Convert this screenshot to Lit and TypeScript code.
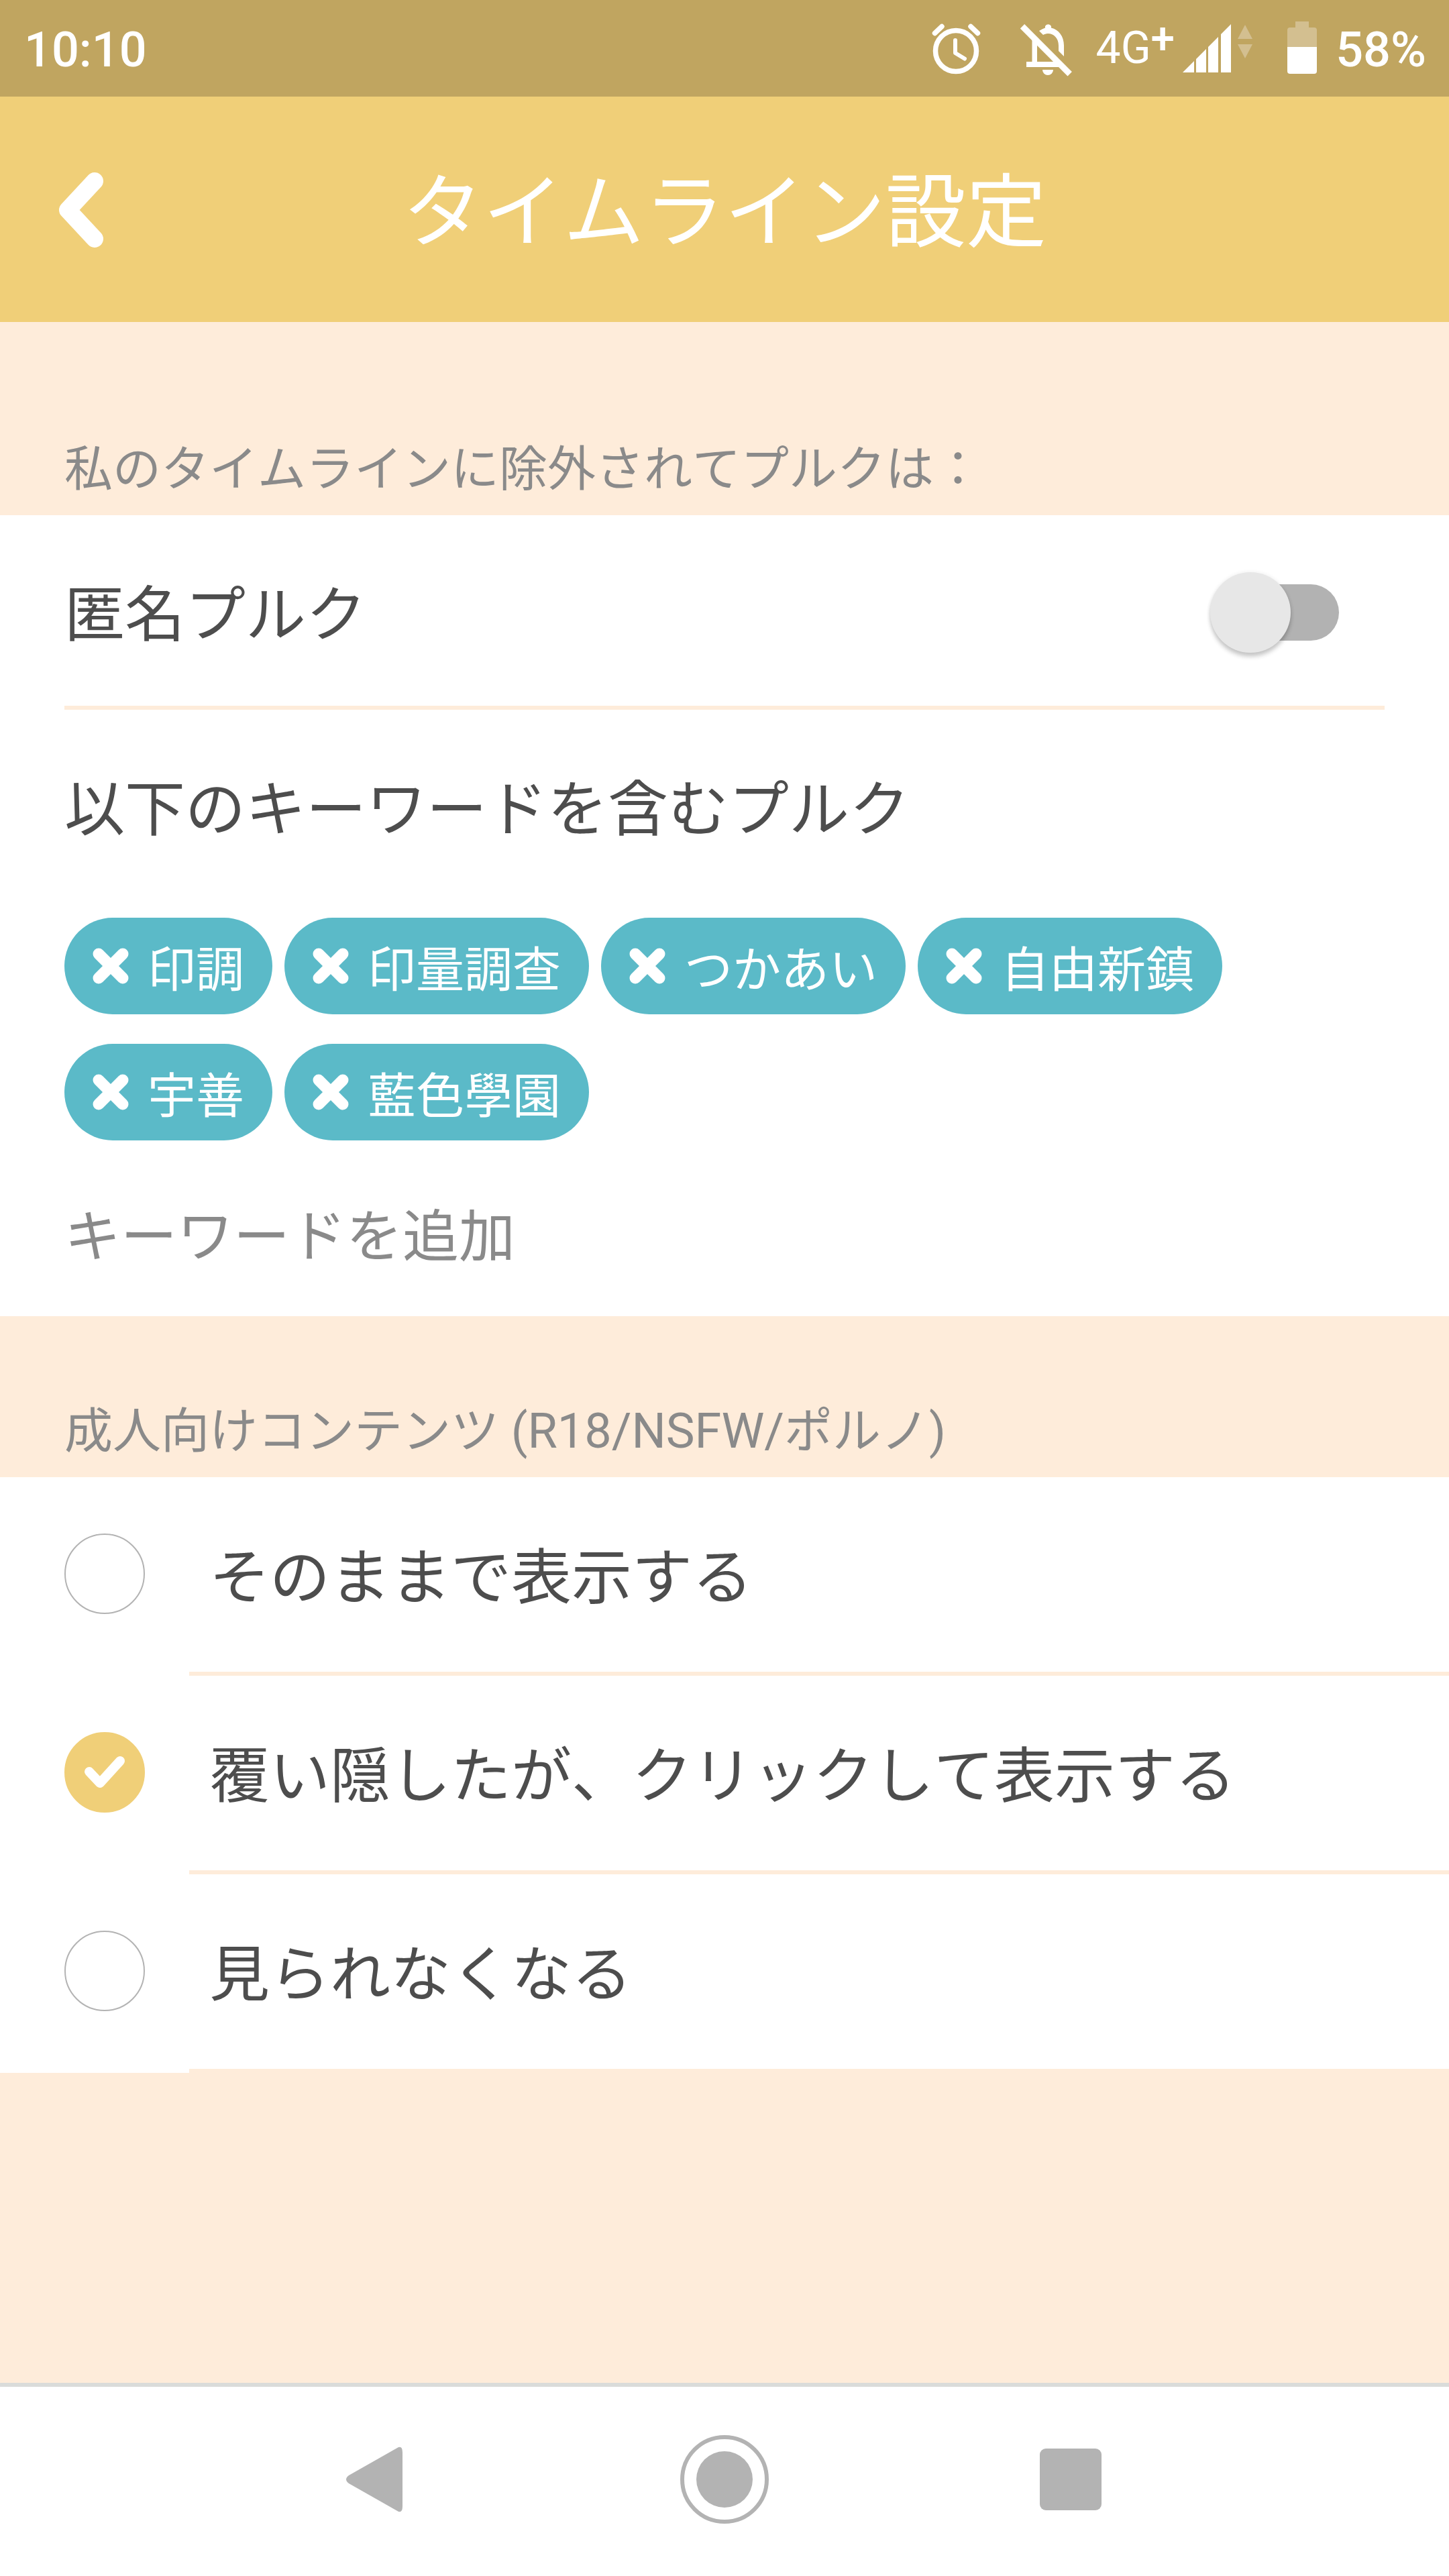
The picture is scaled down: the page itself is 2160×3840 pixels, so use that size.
import { LitElement, html, css, svg } from "lit";
import { customElement, property, state } from "lit/decorators.js";

const KEYWORDS = ["印調", "印量調查", "つかあい", "自由新鎮", "宇善", "藍色學園"];

const ADULT_OPTIONS = [
  { value: "show", text: "そのままで表示する" },
  { value: "cover", text: "覆い隠したが、クリックして表示する" },
  { value: "hide", text: "見られなくなる" },
];

const crossIcon = svg`<path d="M9 9 L45 45 M45 9 L9 45" fill="none" stroke="currentColor" stroke-width="17" stroke-linecap="round" />`;

@customElement("status-bar")
export class StatusBar extends LitElement {
  static styles = css`
    :host {
      display: flex;
      justify-content: space-between;
      align-items: center;
      height: 144px;
      padding: 0 34px 0 36px;
      background: #c0a560;
      color: #fff;
      font-size: 72px;
      line-height: 84px;
      font-weight: 500;
      box-sizing: border-box;
    }
    .text {
      padding-top: 6px;
    }
    .icons {
      display: flex;
      align-items: center;
    }
    .icons svg {
      display: block;
      height: 144px;
    }
    .alarm {
      width: 74px;
      margin-right: 56px;
    }
    .bell {
      width: 82px;
      margin-right: 34px;
    }
    .network {
      display: flex;
      align-items: center;
      margin-right: 12px;
      font-size: 66px;
      font-weight: 400;
    }
    .plus {
      font-size: 64px;
      font-weight: 500;
      padding-bottom: 28px;
    }
    .signal {
      width: 104px;
      margin-right: 52px;
    }
    .battery {
      width: 44px;
      margin-right: 28px;
    }
  `;

  render() {
    return html`
      <time class="text">10:10</time>
      <div class="icons">
        <svg class="alarm" viewBox="0 0 74 144" aria-hidden="true">
          <circle cx="37" cy="76" r="30.5" fill="none" stroke="#fff" stroke-width="7.5" />
          <path d="M36 60 V79 L50 87.500" fill="none" stroke="#fff" stroke-width="6" stroke-linejoin="round" stroke-linecap="round" />
          <path d="M5.500 49.500 L16 39.500 M59 39.500 L69.500 49.500" stroke="#fff" stroke-width="7.5" stroke-linecap="round" />
        </svg>
        <svg class="bell" viewBox="0 0 82 144" aria-hidden="true">
          <path d="M6 39.300 L76.700 110.300" stroke="#fff" stroke-width="9" />
          <path fill="#fff" d="M31 46 C34 44 37 42.500 40 41.500 V39 a5 5 0 0 1 9 0 V41.500 C60 44 68 54 68 68 V84 L60 76 V68 C60 57 53 50 44 50 C41 50 39 51 37 52 Z" />
          <path fill="#fff" d="M20.500 55 L28 63 V92 H58 L66 100 H12 V92 H20.500 Z" />
          <path fill="#fff" d="M36 104 H52 A8 8 0 0 1 36 104 Z" />
        </svg>
        <span class="network"><span>4G</span><span class="plus">+</span></span>
        <svg class="signal" viewBox="0 0 104 144" aria-hidden="true">
          <path fill="#fff" d="M0 108 L17 91 V108 Z M20 88 L35 73 V108 H20 Z M38 70 L53 55 V108 H38 Z M57 51 L72 36 V108 H57 Z" />
          <path fill="#d3bf90" d="M93 37 L104 58 H82 Z M82 66 H104 L93 87 Z" />
        </svg>
        <svg class="battery" viewBox="0 0 44 144" aria-hidden="true">
          <path fill="#d3bf90" d="M12 32 H32 V41 H40 Q44 41 44 45 V70 H0 V45 Q0 41 4 41 H12 Z" />
          <path fill="#fff" d="M0 70 H44 V106 Q44 110 40 110 H4 Q0 110 0 106 Z" />
        </svg>
        <span class="text">58%</span>
      </div>
    `;
  }
}

@customElement("keyword-chip")
export class KeywordChip extends LitElement {
  @property() word = "";

  static styles = css`
    :host {
      display: block;
    }
    .chip {
      display: flex;
      align-items: center;
      gap: 28px;
      height: 144px;
      margin: 0;
      padding: 0 42px;
      border: 0;
      border-radius: 72px;
      background: #5bbac8;
      color: #fff;
      font: inherit;
      font-size: 72px;
      line-height: 84px;
    }
    .cross {
      display: block;
      width: 54px;
      height: 54px;
    }
    .word {
      padding-top: 14px;
    }
  `;

  render() {
    return html`
      <button class="chip" type="button">
        <svg class="cross" viewBox="0 0 54 54" aria-hidden="true">${crossIcon}</svg>
        <span class="word">${this.word}</span>
      </button>
    `;
  }
}

@customElement("app-root")
export class AppRoot extends LitElement {
  @state() private adult = "cover";
  @state() private keywords = KEYWORDS;

  static styles = css`
    :host {
      display: flex;
      flex-direction: column;
      min-height: 100vh;
      background: #feecda;
      color: #4d4d4d;
      font-family: Roboto, "Noto Sans CJK JP", sans-serif;
      font-size: 90px;
      line-height: 120px;
      font-kerning: none;
    }
    .header {
      display: grid;
      grid-template-columns: 240px 1fr 240px;
      align-items: center;
      height: 336px;
      background: #f0cf78;
      color: #fff;
    }
    .back {
      display: block;
      width: 240px;
      height: 240px;
      margin: 0;
      padding: 0;
      border: 0;
      background: none;
      color: inherit;
    }
    .back svg {
      display: block;
      width: 240px;
      height: 240px;
    }
    .title {
      margin: 0;
      padding-top: 12px;
      text-align: center;
      font-size: 120px;
      line-height: 144px;
      font-weight: 400;
    }
    main {
      flex: 1;
    }
    .section-title {
      margin: 0;
      padding: 124px 96px 20px;
      color: #8a8a8a;
      font-size: 72px;
      line-height: 96px;
      font-weight: 400;
    }
    .first {
      padding-top: 172px;
    }
    .panel {
      background: #fff;
    }
    .switch-row {
      display: flex;
      justify-content: space-between;
      align-items: center;
      height: 278px;
      margin: 0 96px;
      padding: 6px 68px 0 0;
      border-bottom: 6px solid #feecda;
    }
    .switch-label {
      padding-top: 10px;
    }
    .switch {
      appearance: none;
      display: grid;
      align-items: center;
      width: 192px;
      height: 120px;
      margin: 0;
    }
    .switch::before,
    .switch::after {
      content: "";
      grid-area: 1 / 1;
    }
    .switch::before {
      height: 84px;
      margin-left: 18px;
      border-radius: 42px;
      background: #b2b2b2;
    }
    .switch::after {
      width: 120px;
      height: 120px;
      border-radius: 60px;
      background: #e7e7e7;
      box-shadow: 0 6px 6px rgba(0, 0, 0, 0.2), 0 0 6px rgba(0, 0, 0, 0.08);
    }
    .switch:checked::after {
      justify-self: end;
    }
    .keywords {
      padding: 90px 96px 60px;
    }
    .keywords-title {
      margin: 0;
      font-size: 90px;
      line-height: 120px;
      font-weight: 400;
    }
    .chips {
      display: flex;
      flex-wrap: wrap;
      gap: 44px 18px;
      margin: 0;
      padding: 100px 0 78px;
      list-style: none;
    }
    .add {
      display: block;
      width: 100%;
      height: 124px;
      margin: 0;
      padding: 8px 0 0;
      border: 0;
      outline: 0;
      background: none;
      color: #4d4d4d;
      font: inherit;
      font-size: 84px;
      font-kerning: none;
      box-sizing: border-box;
    }
    .add::placeholder {
      color: #8a8a8a;
      opacity: 1;
    }
    .options {
      margin: 0;
      padding: 0;
      border: 0;
    }
    .option {
      display: flex;
      align-items: center;
      gap: 66px;
      padding-left: 96px;
    }
    .mark {
      display: grid;
      width: 120px;
      height: 120px;
      padding-bottom: 8px;
    }
    .radio {
      appearance: none;
      grid-area: 1 / 1;
      width: 120px;
      height: 120px;
      margin: 0;
      border: 2px solid #b3b3b3;
      border-radius: 60px;
      box-sizing: border-box;
    }
    .radio:checked {
      border-color: #f0cf78;
      background: #f0cf78;
    }
    .tick {
      grid-area: 1 / 1;
      width: 120px;
      height: 120px;
      pointer-events: none;
      visibility: hidden;
    }
    .radio:checked + .tick {
      visibility: visible;
    }
    .option-text {
      flex: 1;
      display: flex;
      align-items: center;
      height: 278px;
      padding: 12px 0 0 30px;
      border-bottom: 6px solid #feecda;
    }
    .nav {
      display: flex;
      justify-content: center;
      align-items: center;
      gap: 384px;
      height: 276px;
      padding-bottom: 6px;
      border-top: 6px solid #dadcda;
      background: #fff;
    }
    .nav-button {
      width: 132px;
      height: 132px;
      margin: 0;
      padding: 0;
      border: 0;
      background: none;
      color: #b3b3b3;
    }
    .nav-button svg {
      display: block;
      width: 132px;
      height: 132px;
    }
  `;

  private addKeyword(event: Event) {
    const box = event.target as HTMLInputElement;
    if (box.value.trim()) {
      this.keywords = [...this.keywords, box.value.trim()];
      box.value = "";
    }
  }

  private removeKeyword(word: string) {
    this.keywords = this.keywords.filter((k) => k !== word);
  }

  render() {
    return html`
      <status-bar></status-bar>
      <header class="header">
        <button class="back" type="button" aria-label="戻る">
          <svg viewBox="0 0 240 240" aria-hidden="true">
            <path d="M141 78 L101 121 L141 164" fill="none" stroke="currentColor" stroke-width="26" stroke-linecap="round" stroke-linejoin="round" />
          </svg>
        </button>
        <h1 class="title">タイムライン設定</h1>
      </header>
      <main>
        <h2 class="section-title first">私のタイムラインに除外されてプルクは：</h2>
        <section class="panel">
          <div class="switch-row">
            <label class="switch-label" for="anonymous">匿名プルク</label>
            <input id="anonymous" class="switch" type="checkbox" role="switch" />
          </div>
          <div class="keywords">
            <h3 class="keywords-title">以下のキーワードを含むプルク</h3>
            <ul class="chips">
              ${this.keywords.map(
                (word) => html`<li><keyword-chip .word=${word} @click=${() => this.removeKeyword(word)}></keyword-chip></li>`
              )}
            </ul>
            <input class="add" type="text" aria-label="キーワードを追加" placeholder="キーワードを追加" @change=${this.addKeyword} />
          </div>
        </section>
        <h2 class="section-title" id="adult-title">成人向けコンテンツ (R18/NSFW/ポルノ)</h2>
        <fieldset class="panel options" aria-labelledby="adult-title">
          ${ADULT_OPTIONS.map(
            (option) => html`
              <label class="option">
                <span class="mark">
                  <input
                    class="radio"
                    type="radio"
                    name="adult"
                    .checked=${this.adult === option.value}
                    @change=${() => (this.adult = option.value)}
                  />
                  <svg class="tick" viewBox="0 0 120 120" aria-hidden="true">
                    <path d="M37 59 L53 76 L83 43" fill="none" stroke="#fff" stroke-width="14" stroke-linecap="round" stroke-linejoin="round" />
                  </svg>
                </span>
                <span class="option-text">${option.text}</span>
              </label>
            `
          )}
        </fieldset>
      </main>
      <nav class="nav">
        <button class="nav-button" type="button" aria-label="戻る">
          <svg viewBox="0 0 132 132" aria-hidden="true">
            <path d="M96 18 Q102 16 102 26 V106 Q102 116 96 114 L22 72 Q14 66 22 60 Z" fill="currentColor" />
          </svg>
        </button>
        <button class="nav-button" type="button" aria-label="ホーム">
          <svg viewBox="0 0 132 132" aria-hidden="true">
            <circle cx="66" cy="66" r="63" fill="none" stroke="currentColor" stroke-width="6" />
            <circle cx="66" cy="66" r="42" fill="currentColor" />
          </svg>
        </button>
        <button class="nav-button" type="button" aria-label="アプリ一覧">
          <svg viewBox="0 0 132 132" aria-hidden="true">
            <rect x="20" y="20" width="92" height="92" rx="9" fill="currentColor" />
          </svg>
        </button>
      </nav>
    `;
  }
}
